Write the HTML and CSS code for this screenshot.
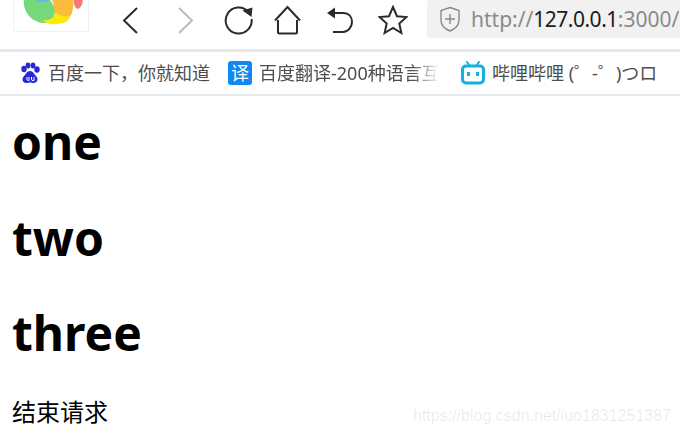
FILE: index.html

```html
<!DOCTYPE html>
<html lang="zh-CN">
<head>
  <meta charset="UTF-8" />
  <title>one two three</title>
  <link rel="stylesheet" href="styles.css">
</head>
<body>
  <div class="toolbar">
    <div class="logo">
      <svg width="74" height="31" viewBox="0 0 74 31">
        <defs><filter id="soft"><feGaussianBlur stdDeviation="0.7"/></filter></defs>
        <g filter="url(#soft)">
          <path d="M10 -3 C8 10 16 22 30 23 C38 23 42 16 41 8 C38 2 36 0 34 -3 Z" fill="#74d97c"/>
          <path d="M20 -3 C22 3 34 4 38 -3 Z" fill="#5bb8e8"/>
          <path d="M36 -3 L59 -3 C60 6 59 14 55 18 C48 18 42 16 40 12 C41 6 39 1 36 -3 Z" fill="#fbbb3c"/>
          <path d="M29 20 C36 21 41 17 42 12 C45 16 50 17 56 16 C56 21 50 24 42 24 C36 25 31 23 29 20 Z" fill="#fde910"/>
          <path d="M60 -3 L69 -3 C69 2 68 7 64 9 C60 8 59 2 60 -3 Z" fill="#f87a78"/>
        </g>
      </svg>
    </div>
    <div class="nav">
      <svg class="ico back" width="20" height="30" viewBox="0 0 20 30"><path d="M16 3 L3 15.500 L16 28" /></svg>
      <svg class="ico forward" width="20" height="30" viewBox="0 0 20 30"><path d="M4 3 L17 15.500 L4 28" /></svg>
      <svg class="ico reload" width="32" height="32" viewBox="0 0 32 32"><path d="M25.500 8 A13 13 0 1 0 28.600 15" /><path class="solid" d="M19.500 6.500 L29.500 3.500 L28.500 13 Z" /></svg>
      <svg class="ico home" width="30" height="30" viewBox="0 0 30 30"><path d="M2 15.500 L14.500 2 L27 15.500 M5 15 V27 Q5 28.500 6.500 28.500 H22.500 Q24 28.500 24 27 V15" /></svg>
      <svg class="ico undo" width="30" height="30" viewBox="0 0 30 30"><path d="M5 8 H18 C24 8 27 12 27 17 C27 22 23 27 18 27 H8" /><path class="solid" d="M2 8 L10 2.500 V13.500 Z" /></svg>
      <svg class="ico star" width="30" height="30" viewBox="0 0 30 30"><path d="M15 2 L19 11.200 L28.500 12.100 L21.300 18.500 L23.400 28 L15 23 L6.600 28 L8.700 18.500 L1.500 12.100 L11 11.200 Z" /></svg>
    </div>
    <div class="address">
      <svg class="shield" width="22" height="26" viewBox="0 0 22 26"><path d="M11 1.500 L20 4.500 V14 C20 19 16 23 11 25 C6 23 2 19 2 14 V4.500 Z M11 8 V18 M6 13 H16" /></svg>
      <span class="url"><span class="dim">http://</span><span class="host">127.0.0.1</span><span class="dim">:3000/</span></span>
    </div>
  </div>

  <div class="bookmarks">
    <div class="mark mark-baidu">
      <svg width="22" height="22" viewBox="0 0 22 22">
        <g fill="#2529d8">
          <ellipse cx="5" cy="7" rx="2.700" ry="3.300"/>
          <ellipse cx="9" cy="3.500" rx="2.400" ry="3"/>
          <ellipse cx="14" cy="3.500" rx="2.400" ry="3"/>
          <ellipse cx="18" cy="7.500" rx="2.700" ry="3.300"/>
          <path d="M11 9 C14 9 15 12 17 14 C20 17 18 21 15 21 C13 21 12 20.500 11 20.500 C10 20.500 9 21 7 21 C4 21 2 17 5 14 C7 12 8 9 11 9 Z"/>
        </g>
        <path d="M8 15 V17.500 Q8 18.500 9.500 18.500 H10 V15 M12.500 15 V17.500 Q12.500 18.500 14 18.500 H15 V15" fill="none" stroke="#fff" stroke-width="1"/>
      </svg>
      <span>百度一下，你就知道</span>
    </div>
    <div class="mark mark-fanyi">
      <span class="fanyi-ico">译</span>
      <span class="fade">百度翻译-200种语言互</span>
    </div>
    <div class="mark mark-bili">
      <svg width="24" height="24" viewBox="0 0 24 24">
        <path d="M6 1 L9 5 M18 1 L15 5" fill="none" stroke="#12b1e0" stroke-width="2" stroke-linecap="round"/>
        <rect x="1.500" y="5" width="21" height="17" rx="3.500" fill="none" stroke="#12b1e0" stroke-width="3"/>
        <rect x="6" y="11" width="3" height="4" fill="#12b1e0"/>
        <rect x="15" y="11" width="3" height="4" fill="#12b1e0"/>
      </svg>
      <span>哔哩哔哩 (゜-゜)つロ</span>
    </div>
  </div>

  <div class="content">
    <h1>one</h1>
    <h1>two</h1>
    <h1>three</h1>
    <p>结束请求</p>
  </div>
  <div class="watermark">https://blog.csdn.net/luo1831251387</div>
</body>
</html>
```

FILE: styles.css

```css
html, body {
  margin: 0;
  height: 435px;
  overflow: hidden;
}
body {
  position: relative;
  background: #fff;
  color: #000;
  font-family: "Noto Sans", "Noto Sans CJK SC", sans-serif;
}
.toolbar {
  display: flex;
  align-items: flex-start;
  height: 49px;
  padding-left: 13px;
  border-bottom: 3px solid #e4e8ec;
  overflow: hidden;
}
.logo {
  width: 74px;
  height: 31px;
  border: 1px solid #f1f1f1;
  border-top: 0;
  flex: none;
}
.nav {
  display: flex;
  align-items: center;
  height: 39px;
  flex: none;
}
.ico {
  flex: none;
  fill: none;
  stroke: #2b2b2b;
  stroke-width: 2;
}
.ico .solid {
  fill: #2b2b2b;
  stroke: none;
}
.back { margin-left: 32px; }
.forward { margin-left: 34px; stroke: #bcbcbc; }
.reload { margin-left: 28px; }
.home { margin-left: 18px; }
.undo { margin-left: 22px; }
.star { margin-left: 23px; }
.address {
  display: flex;
  align-items: center;
  flex: 1;
  height: 38px;
  margin-left: 19px;
  padding-left: 12px;
  background: #f1f1f1;
  border-radius: 3px 0 0 3px;
  white-space: nowrap;
  overflow: hidden;
}
.shield {
  flex: none;
  fill: none;
  stroke: #8a8a8a;
  stroke-width: 1.400;
}
.url {
  margin-left: 10px;
  font-size: 21px;
  color: #1a1a1a;
}
.host { letter-spacing: -0.500px; }
.dim { color: #8b8b8b; }
.bookmarks {
  display: flex;
  align-items: center;
  height: 42px;
  padding-left: 19px;
  border-bottom: 2px solid #e4e8ec;
  overflow: hidden;
}
.mark {
  display: flex;
  align-items: center;
  flex: none;
  font-size: 18px;
  line-height: 22px;
  color: #4d4d4d;
  white-space: nowrap;
}
.mark span { margin-left: 7px; }
.mark-fanyi { margin-left: 18px; }
.mark-bili { margin-left: 22px; }
.mark .fanyi-ico {
  width: 24px;
  height: 24px;
  margin-left: 0;
  background: #1088f2;
  border-radius: 3px;
  color: #fff;
  font-size: 18px;
  line-height: 24px;
  text-align: center;
}
.mark .fade {
  width: 180px;
  overflow: hidden;
  -webkit-mask-image: linear-gradient(to right, #000 85%, transparent);
  mask-image: linear-gradient(to right, #000 85%, transparent);
}
.content { padding: 0 12px; }
h1 {
  margin: 0;
  height: 48px;
  font-size: 48px;
  line-height: 48px;
  font-weight: 700;
  margin-top: 22px;
}
h1 + h1 { margin-top: 47.500px; }
p {
  margin: 39px 0 0;
  font-size: 24px;
  line-height: 32px;
}
.watermark {
  position: absolute;
  right: 9px;
  top: 407px;
  font-family: "Liberation Sans", sans-serif;
  font-size: 16px;
  color: rgba(0, 0, 0, 0.09);
}
```
